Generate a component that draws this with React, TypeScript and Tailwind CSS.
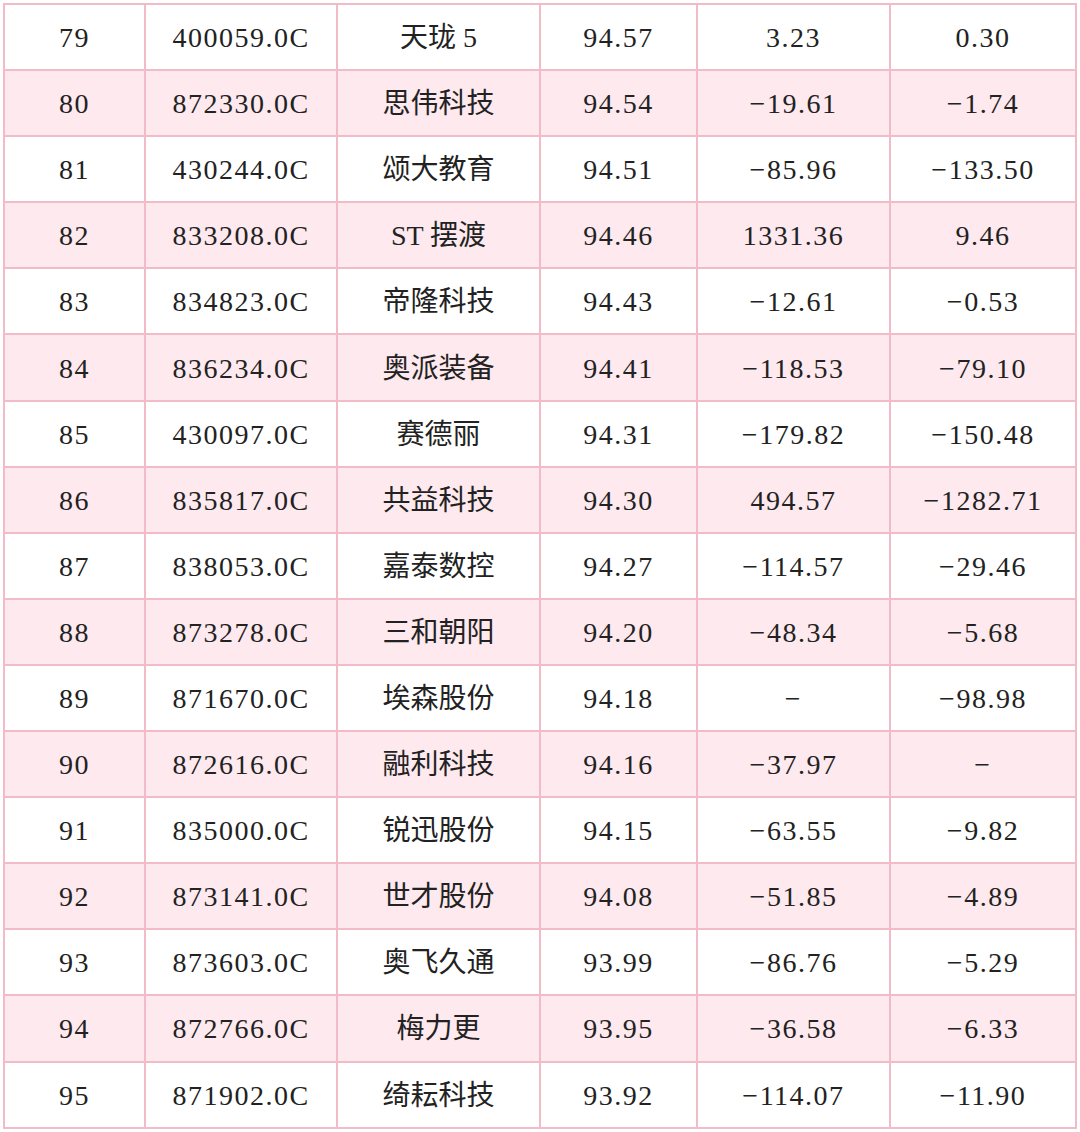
const rows: string[][] = [
  ["79", "400059.0C", "天珑 5", "94.57", "3.23", "0.30"],
  ["80", "872330.0C", "思伟科技", "94.54", "−19.61", "−1.74"],
  ["81", "430244.0C", "颂大教育", "94.51", "−85.96", "−133.50"],
  ["82", "833208.0C", "ST 摆渡", "94.46", "1331.36", "9.46"],
  ["83", "834823.0C", "帝隆科技", "94.43", "−12.61", "−0.53"],
  ["84", "836234.0C", "奥派装备", "94.41", "−118.53", "−79.10"],
  ["85", "430097.0C", "赛德丽", "94.31", "−179.82", "−150.48"],
  ["86", "835817.0C", "共益科技", "94.30", "494.57", "−1282.71"],
  ["87", "838053.0C", "嘉泰数控", "94.27", "−114.57", "−29.46"],
  ["88", "873278.0C", "三和朝阳", "94.20", "−48.34", "−5.68"],
  ["89", "871670.0C", "埃森股份", "94.18", "−", "−98.98"],
  ["90", "872616.0C", "融利科技", "94.16", "−37.97", "−"],
  ["91", "835000.0C", "锐迅股份", "94.15", "−63.55", "−9.82"],
  ["92", "873141.0C", "世才股份", "94.08", "−51.85", "−4.89"],
  ["93", "873603.0C", "奥飞久通", "93.99", "−86.76", "−5.29"],
  ["94", "872766.0C", "梅力更", "93.95", "−36.58", "−6.33"],
  ["95", "871902.0C", "绮耘科技", "93.92", "−114.07", "−11.90"],
];

const widths = ["w-[141px]", "w-[192px]", "w-[203px]", "w-[157px]", "w-[193px]", "w-[186px]"];

export default function App() {
  return (
    <div className="w-[1080px] h-[1132px] bg-white pt-[3px] pl-[3px]">
      <table
        className="border-collapse table-fixed text-[#222222]"
        style={{ fontFamily: '"Liberation Serif", "Noto Sans CJK SC", serif' }}
      >
        <tbody>
          {rows.map((r, i) => (
            <tr key={i} className={i % 2 === 1 ? "bg-[#fde9ee]" : "bg-white"}>
              {r.map((c, j) => (
                <td
                  key={j}
                  className={`${widths[j]} h-[66.1px] border-2 border-[#f1bcc8] text-center align-middle p-0 pt-[2px] text-[28px] ${
                    j === 2 ? "tracking-normal" : "tracking-[1.5px]"
                  }`}
                >
                  {c}
                </td>
              ))}
            </tr>
          ))}
        </tbody>
      </table>
    </div>
  );
}
